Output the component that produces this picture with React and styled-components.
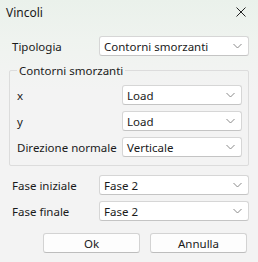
import styled, { createGlobalStyle } from "styled-components";

const Global = createGlobalStyle`
  html, body {
    margin: 0;
    padding: 0;
  }
  body {
    width: 258px;
    height: 262px;
    overflow: hidden;
    font-family: "Noto Sans", "Open Sans", sans-serif;
    font-size: 11.5px;
    color: #1a1a1a;
  }
`;

const Window = styled.div`
  width: 258px;
  height: 262px;
  box-sizing: border-box;
  background: linear-gradient(180deg, #eaf1eb 0px, #eff3ef 40px, #f3f3f3 90px);
  display: flex;
  flex-direction: column;
`;

const TitleBar = styled.div`
  height: 26px;
  display: flex;
  align-items: center;
  justify-content: space-between;
  padding: 0 12px 2px 6px;
  box-sizing: border-box;
  font-size: 12px;
`;

const Close = styled.svg`
  width: 10px;
  height: 10px;
`;

const Body = styled.div`
  padding: 10px 9px 0 12px;
  display: flex;
  flex-direction: column;
`;

const Row = styled.div`
  display: grid;
  grid-template-columns: ${(p) => p.$labelWidth || "87px"} 1fr;
  align-items: center;
  height: 20px;
  margin-top: ${(p) => p.$top || "0px"};
`;

const Label = styled.span`
  white-space: nowrap;
`;

const Combo = styled.div`
  height: 20px;
  box-sizing: border-box;
  background: #fff;
  border: 1px solid #d6d6d6;
  border-bottom-color: #c4c4c4;
  border-radius: 3px;
  display: flex;
  align-items: center;
  justify-content: space-between;
  padding: 0 6px 0 4px;
`;

const Chevron = styled.svg`
  width: 9px;
  height: 6px;
`;

const Group = styled.fieldset`
  margin: 7px 0 0 -3px;
  padding: 0 6px 8px 7px;
  border: 1px solid #dcdcdc;
  border-radius: 2px;
  min-width: 0;
  display: flex;
  flex-direction: column;
`;

const Legend = styled.legend`
  padding: 0 2px;
  margin-left: 0;
  font-size: 11.5px;
`;

const Buttons = styled.div`
  display: flex;
  justify-content: flex-end;
  gap: 10px;
  margin-top: 12px;
  padding-right: 2px;
`;

const Button = styled.div`
  width: 97px;
  height: 20px;
  box-sizing: border-box;
  background: #fdfdfd;
  border: 1px solid #d3d3d3;
  border-bottom-color: #bdbdbd;
  border-radius: 3px;
  display: flex;
  align-items: center;
  justify-content: center;
`;

function Select({ value }) {
  return (
    <Combo>
      <span>{value}</span>
      <Chevron viewBox="0 0 9 6">
        <path d="M0.5 1 L4.5 5 L8.5 1" fill="none" stroke="#8a8a8a" strokeWidth="1" />
      </Chevron>
    </Combo>
  );
}

export default function App() {
  return (
    <>
      <Global />
      <Window>
        <TitleBar>
          <span>Vincoli</span>
          <Close viewBox="0 0 10 10">
            <path d="M0.5 0.5 L9.5 9.5 M9.5 0.5 L0.5 9.5" stroke="#222" strokeWidth="1" />
          </Close>
        </TitleBar>
        <Body>
          <Row>
            <Label>Tipologia</Label>
            <Select value="Contorni smorzanti" />
          </Row>
          <Group>
            <Legend>Contorni smorzanti</Legend>
            <Row $labelWidth="105px" $top="7px">
              <Label>x</Label>
              <Select value="Load" />
            </Row>
            <Row $labelWidth="105px" $top="6px">
              <Label>y</Label>
              <Select value="Load" />
            </Row>
            <Row $labelWidth="105px" $top="6px">
              <Label>Direzione normale</Label>
              <Select value="Verticale" />
            </Row>
          </Group>
          <Row $top="9px">
            <Label>Fase iniziale</Label>
            <Select value="Fase 2" />
          </Row>
          <Row $top="6px">
            <Label>Fase finale</Label>
            <Select value="Fase 2" />
          </Row>
          <Buttons>
            <Button>Ok</Button>
            <Button>Annulla</Button>
          </Buttons>
        </Body>
      </Window>
    </>
  );
}
